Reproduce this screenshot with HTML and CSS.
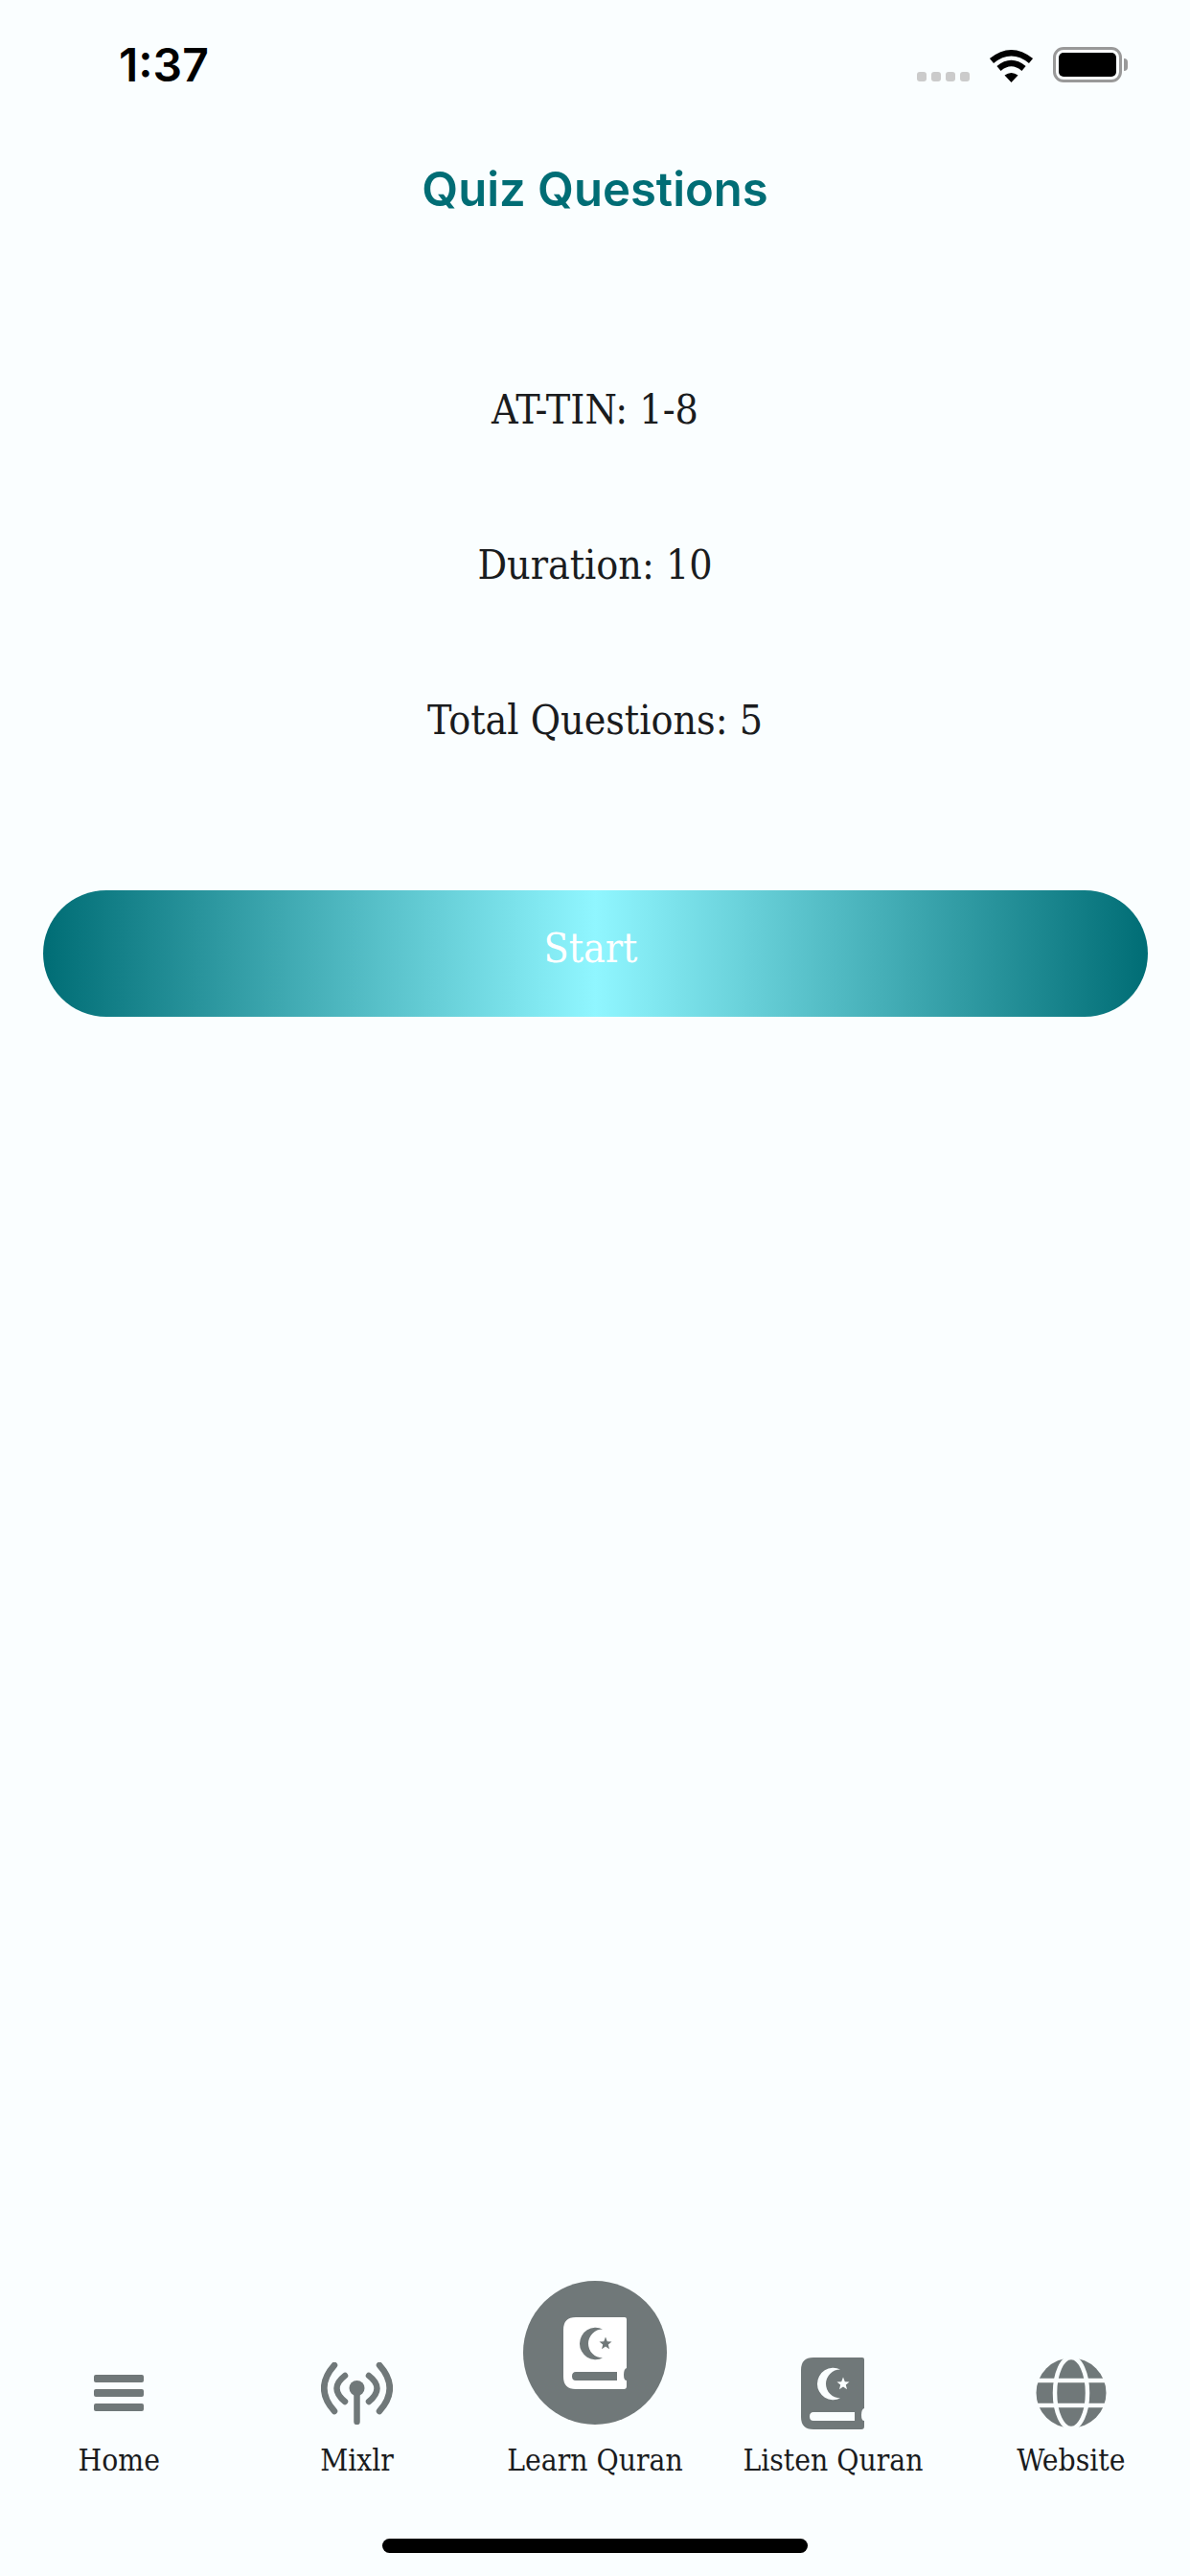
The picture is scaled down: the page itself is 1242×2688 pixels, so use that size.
FILE: index.html
```html
<!DOCTYPE html>
<html lang="en">
<head>
    <meta charset="UTF-8">
    <meta name="viewport" content="width=device-width, initial-scale=1.0">
    <title>Quiz Questions</title>
    <link rel="stylesheet" href="styles.css">
</head>
<body>
    <svg class="defs" width="0" height="0">
        <symbol id="quran" viewBox="0 0 66 75">
            <path fill-rule="evenodd" d="M13 0H64Q66 0 66 2V53Q63 54 63 60T66 66V72Q66 75 63 75H13Q0 75 0 62V13Q0 0 13 0ZM13 57Q9 57 9 61.500T13 66H56V57ZM41 12.500A16.700 16.700 0 1 0 41 42.500A14.500 14.500 0 1 1 41 12.500ZM44 20.500L45.800 25.200L50.500 25.400L46.800 28.500L48 33.200L44 30.500L40 33.200L41.200 28.500L37.500 25.400L42.200 25.200Z"/>
        </symbol>
    </svg>

    <div class="app">
        <!-- barra de estado -->
        <div class="status">
            <span class="time">1:37</span>
            <div class="status-icons">
                <div class="signal"><i></i><i></i><i></i><i></i></div>
                <svg class="wifi" width="47" height="36" viewBox="0 0 47 36">
                    <path d="M3 13.500Q23.500 -3 44 13.500" fill="none" stroke="#000" stroke-width="6.500"/>
                    <path d="M10.500 21.500Q23.500 10.500 36.500 21.500" fill="none" stroke="#000" stroke-width="6.500"/>
                    <path d="M16.500 28.500Q23.500 23.500 30.500 28.500L23.500 36Z"/>
                </svg>
                <div class="battery"><div class="battery-level"></div></div>
            </div>
        </div>

        <h1 class="title">Quiz Questions</h1>

        <div class="info">
            <p>AT-TIN: 1-8</p>
            <p>Duration: 10</p>
            <p>Total Questions: 5</p>
        </div>

        <button class="start">Start</button>

        <div class="spacer"></div>

        <nav class="tabs">
            <a class="tab">
                <div class="tab-icon">
                    <div class="menu"><i></i><i></i><i></i></div>
                </div>
                <span>Home</span>
            </a>
            <a class="tab">
                <div class="tab-icon">
                    <svg width="75" height="65" viewBox="0 0 75 65" fill="none" stroke="#707879" stroke-width="6.500" stroke-linecap="round">
                        <path d="M14 3Q-7.500 27 14 51"/>
                        <path d="M25 14Q8 27 25 41"/>
                        <path d="M50 14Q67 27 50 41"/>
                        <path d="M61 3Q82.500 27 61 51"/>
                        <path d="M37.500 27V62"/>
                        <circle cx="37.500" cy="27" r="8" fill="#707879" stroke="none"/>
                    </svg>
                </div>
                <span>Mixlr</span>
            </a>
            <a class="tab">
                <div class="tab-icon">
                    <div class="raised">
                        <svg class="book-white" width="66" height="75"><use href="#quran"/></svg>
                    </div>
                </div>
                <span>Learn Quran</span>
            </a>
            <a class="tab">
                <div class="tab-icon">
                    <svg class="book-grey" width="66" height="75"><use href="#quran"/></svg>
                </div>
                <span>Listen Quran</span>
            </a>
            <a class="tab">
                <div class="tab-icon">
                    <svg width="74" height="74" viewBox="0 0 74 74">
                        <circle cx="37" cy="37" r="36.500" fill="#707879"/>
                        <g fill="none" stroke="#fafeff" stroke-width="4.500">
                            <ellipse cx="37" cy="37" rx="17" ry="37"/>
                            <path d="M0 24H74"/>
                            <path d="M0 50H74"/>
                        </g>
                    </svg>
                </div>
                <span>Website</span>
            </a>
        </nav>

        <div class="home-bar"></div>
    </div>
</body>
</html>
```

FILE: styles.css
```css
* {
    box-sizing: border-box;
}

body {
    margin: 0;
    background-color: #fafeff;
    color: #1a1c1e;
    font-family: "DejaVu Serif Condensed", "DejaVu Serif", serif;
}

.defs {
    display: block;
    height: 0;
}

.app {
    height: 2688px;
    display: flex;
    flex-direction: column;
}

/* status bar */
.status {
    height: 136px;
    padding: 44px 71px 0 124px;
    display: flex;
    justify-content: space-between;
    align-items: flex-start;
}

.time {
    font-family: Inter, sans-serif;
    font-weight: 600;
    font-size: 48px;
    line-height: 47px;
    color: #000;
}

.status-icons {
    margin-top: 5px;
    display: flex;
    align-items: flex-end;
    gap: 20px;
}

.signal {
    display: flex;
    gap: 5px;
    margin-bottom: 1px;
}

.signal i {
    width: 10px;
    height: 10px;
    border-radius: 3px;
    background-color: #cbcbcb;
}

.battery {
    position: relative;
    width: 72px;
    height: 37px;
    padding: 3px;
    border: 3px solid #999;
    border-radius: 11px;
}

.battery::after {
    content: "";
    position: absolute;
    right: -9px;
    top: 9px;
    width: 4px;
    height: 13px;
    border-radius: 0 6px 6px 0;
    background-color: #999;
}

.battery-level {
    height: 100%;
    border-radius: 5px;
    background-color: #000;
}

.title {
    margin: 0;
    text-align: center;
    font-family: Inter, sans-serif;
    font-weight: 600;
    font-size: 49px;
    line-height: 124px;
    color: #006d75;
}

.info {
    margin-top: 138px;
    display: flex;
    flex-direction: column;
    gap: 102px;
}

.info p {
    margin: 0;
    text-align: center;
    font-size: 42.5px;
    line-height: 60px;
}

.start {
    margin: 147px 44px 0 45px;
    height: 132px;
    border: none;
    border-radius: 66px;
    padding: 0 10px 11px 0;
    background: linear-gradient(90deg, #006d75 0%, #90f6ff 50%, #006d75 100%);
    color: #fff;
    font-family: "DejaVu Serif Condensed", "DejaVu Serif", serif;
    font-size: 42.5px;
}

.spacer {
    flex: 1;
}

/* tab bar */
.tabs {
    display: grid;
    grid-template-columns: repeat(5, 1fr);
}

.tab {
    display: flex;
    flex-direction: column;
    align-items: center;
    font-size: 31.5px;
    line-height: 40px;
}

.tab-icon {
    height: 80px;
    margin-bottom: 10px;
    display: flex;
    align-items: center;
    justify-content: center;
}

.raised {
    flex: none;
    width: 150px;
    height: 150px;
    margin-top: -84px;
    border-radius: 50%;
    background-color: #707879;
    display: flex;
    align-items: center;
    justify-content: center;
}

.menu {
    display: flex;
    flex-direction: column;
    gap: 7px;
}

.menu i {
    display: block;
    width: 52px;
    height: 8px;
    border-radius: 2px;
    background-color: #707879;
}

.book-white {
    fill: #fff;
}

.book-grey {
    fill: #707879;
}

.home-bar {
    width: 444px;
    height: 15px;
    margin: 62px auto 24px;
    border-radius: 8px;
    background-color: #000;
}
```
